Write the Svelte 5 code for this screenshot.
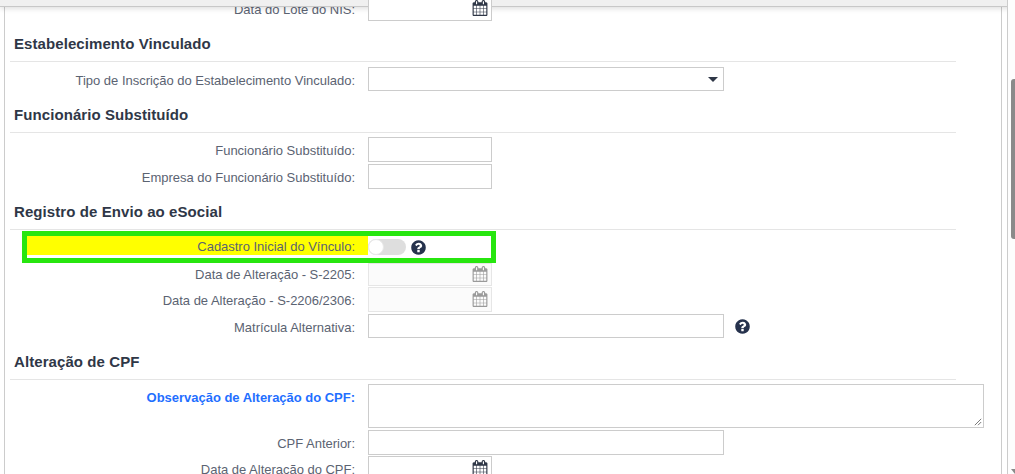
<script>
  const calendar = "M192 1664h288v-288h-288v288zm352 0h320v-288h-320v288zm-352-352h288v-320h-288v320zm352 0h320v-320h-320v320zm-352-384h288v-288h-288v288zm736 736h320v-288h-320v288zm-384-736h320v-288h-320v288zm768 736h288v-288h-288v288zm-384-352h320v-320h-320v320zm-352-864v-288q0-13-9.500-22.500t-22.500-9.500h-64q-13 0-22.500 9.500t-9.500 22.500v288q0 13 9.500 22.500t22.500 9.500h64q13 0 22.500-9.500t9.500-22.500zm736 864h288v-320h-288v320zm-384-384h320v-288h-320v288zm384 0h288v-288h-288v288zm32-480v-288q0-13-9.500-22.500t-22.500-9.500h-64q-13 0-22.500 9.500t-9.500 22.500v288q0 13 9.500 22.500t22.500 9.500h64q13 0 22.500-9.500t9.500-22.500zm384-64v1280q0 52-38 90t-90 38h-1408q-52 0-90-38t-38-90v-1280q0-52 38-90t90-38h128v-96q0-66 47-113t113-47h64q66 0 113 47t47 113v96h384v-96q0-66 47-113t113-47h64q66 0 113 47t47 113v96h128q52 0 90 38t38 90z";
  const help = "M1024 1376v-192q0-14-9-23t-23-9h-192q-14 0-23 9t-9 23v192q0 14 9 23t23 9h192q14 0 23-9t9-23zm256-672q0-88-55.500-163t-138.500-116-170-41q-243 0-371 213-15 24 8 42l132 100q7 6 19 6 16 0 25-12 53-68 86-92 34-24 86-24 48 0 85.500 26t37.500 59q0 38-20 61t-68 45q-63 28-115.500 86.500t-52.500 125.500v36q0 14 9 23t23 9h192q14 0 23-9t9-23q0-19 21.500-49.500t54.500-49.500q32-18 49-28.500t46-35 44.500-48 28-60.500 12.500-81zm384 192q0 209-103 385.500t-279.500 279.500-385.500 103-385.500-103-279.500-279.500-103-385.500 103-385.500 279.500-279.500 385.500-103 385.500 103 279.500 279.500 103 385.500z";
</script>

{#snippet dateInput(disabled = false)}
  <div class="input short" class:disabled>
    <svg class="cal" viewBox="0 0 1792 1792"><path d={calendar} /></svg>
  </div>
{/snippet}

{#snippet helpIcon()}
  <svg class="help" viewBox="0 0 1792 1792"><path d={help} /></svg>
{/snippet}

<div class="page">
  <div class="topbar"></div>

  <div class="panel">
    <form class="form">
      <div class="row">
        <span class="label">Data do Lote do NIS:</span>
        {@render dateInput()}
      </div>

      <h4>Estabelecimento Vinculado</h4>
      <div class="row">
        <span class="label">Tipo de Inscrição do Estabelecimento Vinculado:</span>
        <div class="input long select"><span class="caret"></span></div>
      </div>

      <h4 class="close">Funcionário Substituído</h4>
      <div class="row">
        <span class="label">Funcionário Substituído:</span>
        <div class="input short"></div>
      </div>
      <div class="row">
        <span class="label">Empresa do Funcionário Substituído:</span>
        <div class="input short"></div>
      </div>

      <h4>Registro de Envio ao eSocial</h4>
      <div class="highlight">
        <div class="toggle-row">
          <span class="label marked">Cadastro Inicial do Vínculo:</span>
          <span class="toggle"><span class="knob"></span></span>
          {@render helpIcon()}
        </div>
      </div>
      <div class="row first-date">
        <span class="label">Data de Alteração - S-2205:</span>
        {@render dateInput(true)}
      </div>
      <div class="row tight">
        <span class="label">Data de Alteração - S-2206/2306:</span>
        {@render dateInput(true)}
      </div>
      <div class="row">
        <span class="label">Matrícula Alternativa:</span>
        <div class="input long slim"></div>
        <span class="side-help">{@render helpIcon()}</span>
      </div>

      <h4 class="close">Alteração de CPF</h4>
      <div class="row">
        <span class="label required">Observação de Alteração do CPF:</span>
        <div class="input area">
          <svg class="grip" viewBox="0 0 10 10"><path d="M9 1 1 9M9 5 5 9" /></svg>
        </div>
      </div>
      <div class="row">
        <span class="label">CPF Anterior:</span>
        <div class="input long"></div>
      </div>
      <div class="row tight">
        <span class="label">Data de Alteração do CPF:</span>
        {@render dateInput()}
      </div>
    </form>
  </div>

  <div class="scrollbar"><div class="thumb"></div><span class="arrow"></span></div>
</div>

<style>
  :global(body) {
    margin: 0;
    background: #fff;
  }

  .page {
    position: relative;
    display: flex;
    height: 474px;
    overflow: hidden;
    font-family: "Liberation Sans", Arial, sans-serif;
    color: #5b6372;
  }

  .topbar {
    position: absolute;
    top: 0;
    left: 0;
    right: 0;
    height: 6px;
    background: #f0f0f0;
    border-bottom: 1px solid #c8c8c8;
    box-shadow: 0 2px 5px rgba(0, 0, 0, 0.12);
  }

  .panel {
    flex: 0 0 998px;
    margin-left: 4px;
    border-left: 1px solid #ccc;
    border-right: 1px solid #ccc;
    box-sizing: border-box;
    overflow: hidden;
  }

  .form {
    width: 946px;
    margin: -4px 0 0 5px;
  }

  h4 {
    margin: 0 0 5px;
    height: 41px;
    box-sizing: border-box;
    padding: 14px 0 0 4px;
    border-bottom: 1px solid #e5e5e5;
    font-size: 15px;
    line-height: 17px;
    letter-spacing: 0.08px;
    font-weight: bold;
    color: #2f3747;
  }

  h4.close {
    margin-bottom: 4px;
  }

  .row {
    display: flex;
    align-items: flex-start;
  }

  .row + .row {
    margin-top: 2px;
  }

  .row.tight {
    margin-top: 1px;
  }

  .label {
    width: 345px;
    height: 25px;
    flex: none;
    padding-right: 13px;
    box-sizing: content-box;
    text-align: right;
    font-size: 13px;
    line-height: 27px;
    letter-spacing: -0.02px;
    white-space: nowrap;
  }

  .input {
    position: relative;
    flex: none;
    box-sizing: border-box;
    height: 25px;
    border: 1px solid #ccc;
    background: #fff;
  }

  .short {
    width: 124px;
  }

  .long {
    width: 356px;
  }

  .slim {
    height: 24px;
  }

  .disabled {
    border-color: #e6e6e6;
    background: #fbfbfb;
  }

  .select {
    height: 24px;
    display: flex;
    align-items: center;
    justify-content: flex-end;
    padding-right: 5px;
  }

  .caret {
    border-left: 5.5px solid transparent;
    border-right: 5.5px solid transparent;
    border-top: 5px solid #2f3747;
  }

  .cal {
    position: absolute;
    top: 3px;
    right: 3px;
    width: 16px;
    height: 16px;
    fill: #2f3747;
  }

  .disabled .cal {
    fill: #9a9a9a;
  }

  .highlight {
    position: relative;
    z-index: 1;
    width: 474px;
    height: 32px;
    box-sizing: border-box;
    margin: -4px 0 0 12px;
    border: 5px solid #27e60f;
    background: #fff;
  }

  .toggle-row {
    display: flex;
    align-items: flex-start;
  }

  .marked {
    width: 328px;
    height: 19px;
    padding-right: 13px;
    background: #ffff00;
    line-height: 21px;
  }

  .toggle {
    display: block;
    width: 38px;
    height: 16px;
    margin-top: 3px;
    border-radius: 8px;
    background: #dedede;
  }

  .knob {
    display: block;
    width: 16px;
    height: 16px;
    box-sizing: border-box;
    border-radius: 50%;
    background: #fff;
    border: 1px solid #e8e8e8;
  }

  .help {
    width: 17px;
    height: 17px;
    fill: #26324d;
  }

  .toggle-row .help {
    margin: 3px 0 0 4px;
  }

  .first-date .label {
    height: 23px;
    line-height: 23px;
  }

  .first-date .input {
    height: 23px;
  }

  .first-date .cal {
    top: 2px;
  }

  .side-help {
    margin-left: 10px;
    display: flex;
    align-items: center;
    height: 25px;
  }

  .area {
    width: 616px;
    height: 44px;
  }

  .grip {
    position: absolute;
    right: 1px;
    bottom: 1px;
    width: 8px;
    height: 8px;
    stroke: #555;
    stroke-width: 1;
    fill: none;
  }

  .required {
    color: #1f6fff;
    font-weight: bold;
  }

  .scrollbar {
    position: relative;
    flex: 1;
    margin-left: 5px;
    border-left: 1px solid #ccc;
    background: #fdfdfd;
  }

  .thumb {
    position: absolute;
    top: 79px;
    left: 3px;
    right: 0;
    height: 160px;
    border-radius: 3px 0 0 3px;
    background: #8a8a8a;
  }

  .arrow {
    position: absolute;
    bottom: 0;
    left: 3px;
    border-left: 4px solid transparent;
    border-right: 4px solid transparent;
    border-top: 5px solid #8a8a8a;
  }
</style>
